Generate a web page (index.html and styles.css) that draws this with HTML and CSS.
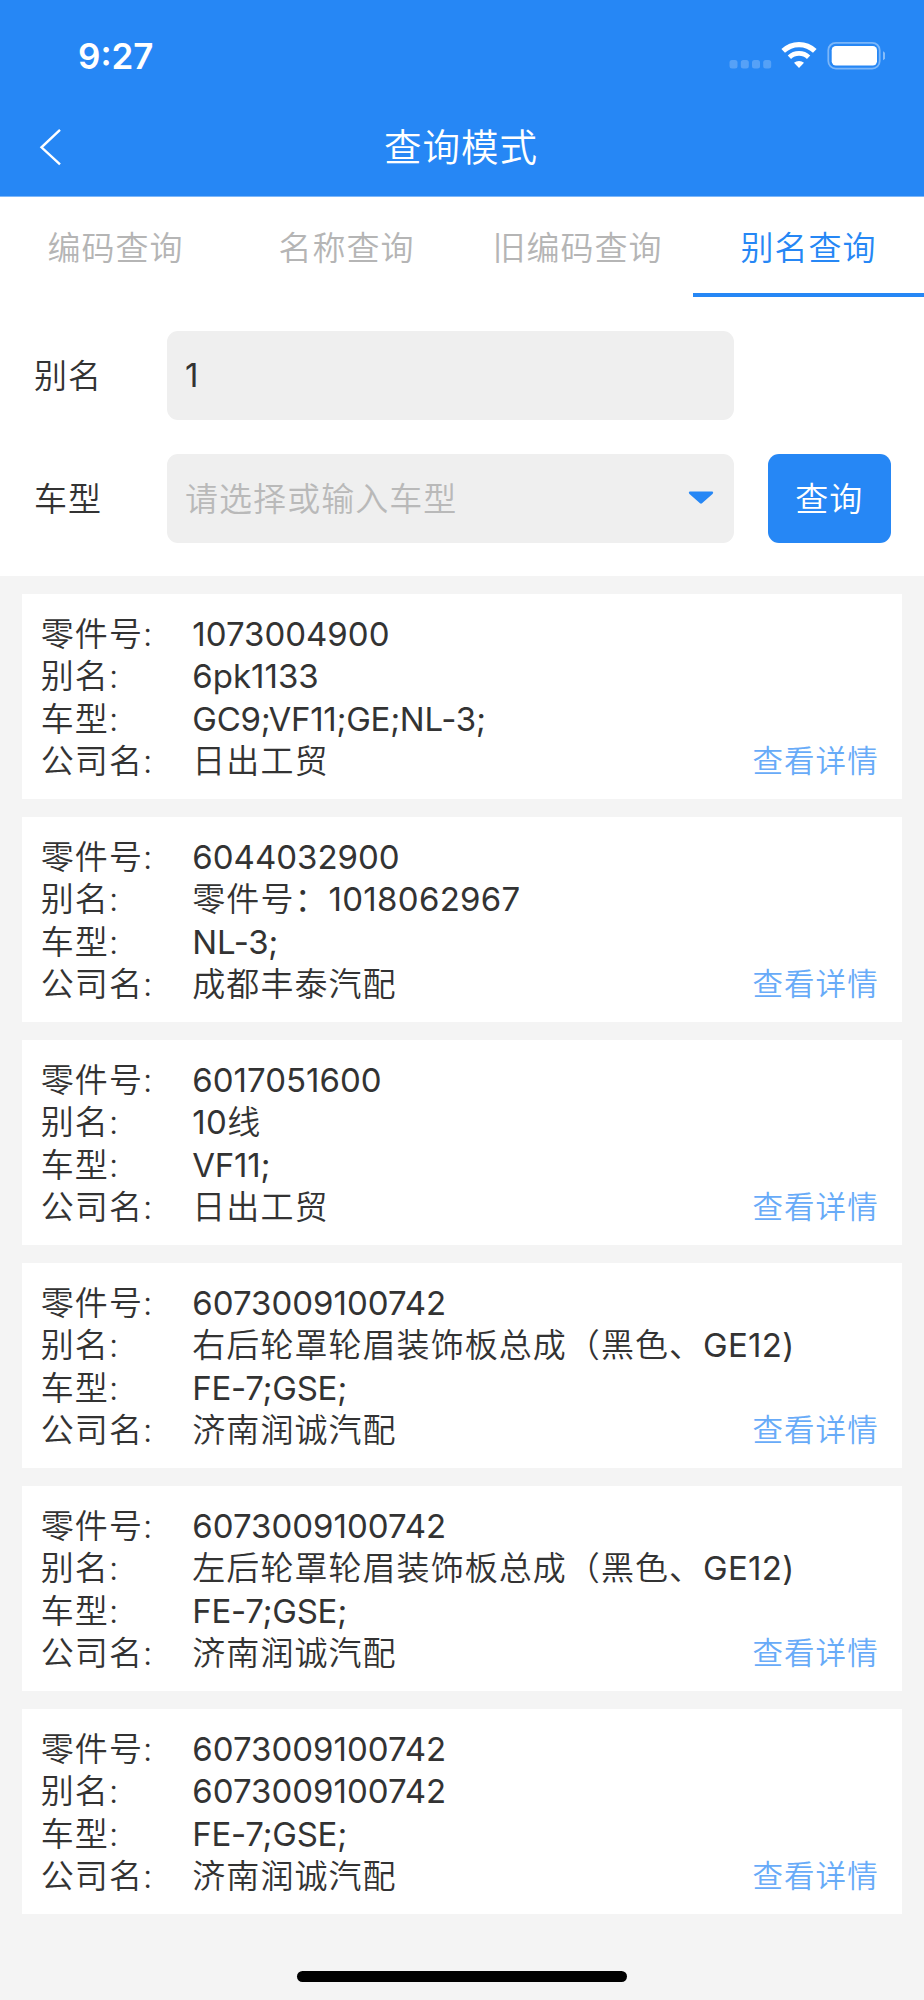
FILE: index.html
```html
<!DOCTYPE html>
<html lang="zh-CN">
<head>
    <meta charset="UTF-8">
    <meta name="viewport" content="width=device-width, initial-scale=1.0">
    <title>查询模式</title>
    <link rel="stylesheet" href="styles.css">
</head>

<body>
    <header class="header">
        <div class="status-bar">
            <span class="time">9:27</span>
            <svg class="status-icons" width="156" height="30" viewBox="0 0 156 30">
                <g fill="#fff" opacity="0.22">
                    <rect x="0.5" y="20" width="8" height="8.5" rx="2.5"/>
                    <rect x="11.8" y="20" width="8" height="8.5" rx="2.5"/>
                    <rect x="23" y="20" width="8" height="8.5" rx="2.5"/>
                    <rect x="34.2" y="20" width="8" height="8.5" rx="2.5"/>
                </g>
                <g fill="none" stroke="#fff">
                    <path d="M54.2 10.9a22.8 22.8 0 0 1 31.6 0" stroke-width="5.2"/>
                    <path d="M60.4 17.2a14 14 0 0 1 19.2 0" stroke-width="4.8"/>
                </g>
                <path d="M65 22.8a7.5 7.5 0 0 1 10 0L70 28z" fill="#fff"/>
                <rect x="99.3" y="2.8" width="51.4" height="25.8" rx="7.5" fill="none" stroke="#fff" stroke-width="1.8" opacity="0.4"/>
                <rect x="102.7" y="6" width="45.3" height="19.4" rx="4.2" fill="#fff"/>
                <path d="M154 11.2c3.6 1.2 3.6 7.8 0 9z" fill="#fff" opacity="0.45"/>
            </svg>
        </div>
        <div class="nav-bar">
            <svg class="back" width="24" height="38" viewBox="0 0 24 38">
                <path d="M21 1.8L2.5 19.3L21 36.4" fill="none" stroke="#fff" stroke-width="2.4"/>
            </svg>
            <h1>查询模式</h1>
        </div>
    </header>

    <nav class="tabs">
        <a class="tab">编码查询</a>
        <a class="tab">名称查询</a>
        <a class="tab">旧编码查询</a>
        <a class="tab active">别名查询</a>
    </nav>

    <section class="search">
        <label>别名</label>
        <div class="field code">1</div>
        <label class="model">车型</label>
        <div class="field placeholder">
            <span>请选择或输入车型</span>
            <svg width="26" height="14" viewBox="0 0 26 14">
                <path d="M1.5 0.5H24.5Q26 1.5 24.5 3L14 12.3Q13 13.2 12 12.3L1.5 3Q0 1.5 1.5 0.5z" fill="#2687f5"/>
            </svg>
        </div>
        <button class="submit">查询</button>
    </section>

    <main class="list">
        <article class="card">
            <span>零件号:</span><span class="code">1073004900</span>
            <span>别名:</span><span class="code">6pk1133</span>
            <span>车型:</span><span class="code models">GC9;VF11;GE;NL-3;</span>
            <span>公司名:</span><span>日出工贸</span>
            <a class="detail">查看详情</a>
        </article>
        <article class="card">
            <span>零件号:</span><span class="code">6044032900</span>
            <span>别名:</span><span>零件号：<i class="code">1018062967</i></span>
            <span>车型:</span><span class="code models">NL-3;</span>
            <span>公司名:</span><span>成都丰泰汽配</span>
            <a class="detail">查看详情</a>
        </article>
        <article class="card">
            <span>零件号:</span><span class="code">6017051600</span>
            <span>别名:</span><span><i class="code">10</i>线</span>
            <span>车型:</span><span class="code models">VF11;</span>
            <span>公司名:</span><span>日出工贸</span>
            <a class="detail">查看详情</a>
        </article>
        <article class="card">
            <span>零件号:</span><span class="code">6073009100742</span>
            <span>别名:</span><span>右后轮罩轮眉装饰板总成（黑色、<i class="code">GE12)</i></span>
            <span>车型:</span><span class="code models">FE-7;GSE;</span>
            <span>公司名:</span><span>济南润诚汽配</span>
            <a class="detail">查看详情</a>
        </article>
        <article class="card">
            <span>零件号:</span><span class="code">6073009100742</span>
            <span>别名:</span><span>左后轮罩轮眉装饰板总成（黑色、<i class="code">GE12)</i></span>
            <span>车型:</span><span class="code models">FE-7;GSE;</span>
            <span>公司名:</span><span>济南润诚汽配</span>
            <a class="detail">查看详情</a>
        </article>
        <article class="card">
            <span>零件号:</span><span class="code">6073009100742</span>
            <span>别名:</span><span class="code">6073009100742</span>
            <span>车型:</span><span class="code models">FE-7;GSE;</span>
            <span>公司名:</span><span>济南润诚汽配</span>
            <a class="detail">查看详情</a>
        </article>
    </main>

    <div class="home-indicator"></div>
</body>

</html>
```
FILE: styles.css
```css
* {
    box-sizing: border-box;
}

body {
    margin: 0;
    height: 2000px;
    display: flex;
    flex-direction: column;
    background: #f4f4f4;
    color: #333;
    font-family: Inter, 'Noto Sans CJK SC', sans-serif;
    font-size: 33px;
    font-weight: 350;
    letter-spacing: 1.05px;
    overflow: hidden;
}

.header {
    height: 197px;
    background: #2687f5;
    border-bottom: 1px solid #7db7f9;
    color: #fff;
}

.status-bar {
    height: 98px;
    display: flex;
    justify-content: space-between;
    padding: 0 39px 0 78px;
}

.time {
    line-height: 112px;
    font-size: 35px;
    font-weight: 600;
    letter-spacing: 0;
}

.status-icons {
    margin-top: 39.5px;
}

.nav-bar {
    height: 98px;
    display: grid;
    grid-template-columns: 1fr auto 1fr;
    align-items: center;
}

.back {
    margin-left: 39px;
}

h1 {
    margin: 0 2px 5px 0;
    font-size: 37.5px;
    font-weight: 350;
}

.tabs {
    height: 100px;
    display: grid;
    grid-template-columns: repeat(4, 1fr);
    background: #fff;
}

.tab {
    height: 100px;
    padding-top: 3px;
    border-bottom: 4.5px solid transparent;
    line-height: 96px;
    text-align: center;
    color: #b5b5b5;
}

.tab.active {
    color: #2687f5;
    border-color: #2687f5;
}

.search {
    height: 279px;
    display: grid;
    grid-template-columns: 99px 567px 122.5px;
    grid-template-rows: 89px 89px;
    column-gap: 34px;
    row-gap: 34px;
    padding: 33.5px 34px 0;
    background: #fff;
    align-items: center;
}

.search label {
    padding-bottom: 2px;
}

.field {
    height: 89px;
    display: flex;
    align-items: center;
    justify-content: space-between;
    padding: 0 20px 0 18px;
    background: #efefef;
    border-radius: 11px;
}

.placeholder {
    color: #b9b9b9;
}

.placeholder span {
    padding-bottom: 2px;
}

.model {
    grid-column: 1;
}

.submit {
    height: 89px;
    border: none;
    border-radius: 11px;
    padding: 0 0 2px;
    background: #2687f5;
    color: #fff;
    font: inherit;
    letter-spacing: inherit;
}

.list {
    display: flex;
    flex-direction: column;
    gap: 17.7px;
    padding: 17.6px 22.3px 0;
}

.card {
    height: 205.4px;
    display: grid;
    grid-template-columns: 151.5px minmax(0, 1fr) auto;
    grid-auto-rows: 42.5px;
    padding: 19px 23px 0 18.5px;
    background: #fff;
    line-height: 42.5px;
    white-space: nowrap;
}

.card span:nth-of-type(odd) {
    grid-column: 1;
}

.card span:nth-of-type(even) {
    grid-column: 2;
}

/* part numbers and model codes */
.code {
    font-style: normal;
    font-weight: 400;
    letter-spacing: 0;
}

i.code {
    letter-spacing: 0.3px;
}

.models {
    letter-spacing: -0.25px;
}

.detail {
    grid-area: 4 / 3;
    color: #68abf8;
    font-size: 30.5px;
}

.home-indicator {
    width: 330px;
    height: 11.5px;
    margin: auto auto 18px;
    border-radius: 6px;
    background: #000;
}
```
